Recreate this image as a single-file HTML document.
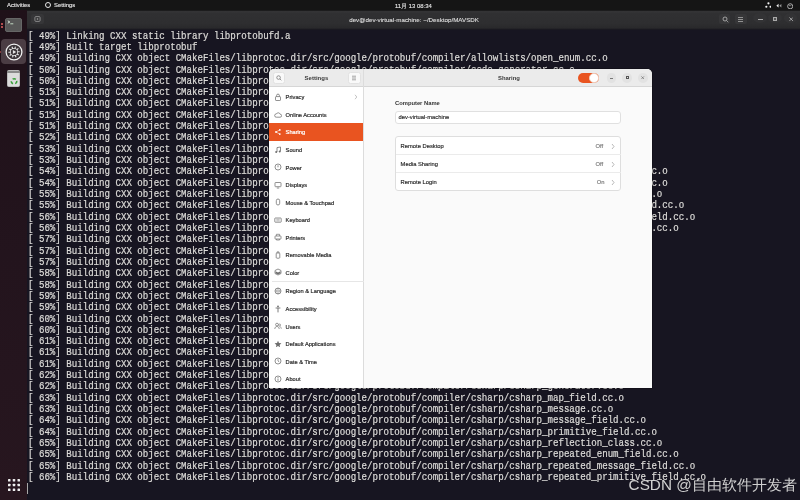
<!DOCTYPE html>
<html><head><meta charset="utf-8">
<style>
*{margin:0;padding:0;box-sizing:border-box}
html,body{width:800px;height:500px;overflow:hidden;background:#171421;font-family:"Liberation Sans",sans-serif}
#root{position:absolute;left:0;top:0;width:800px;height:500px;overflow:hidden}
.abs{position:absolute}
#topbar{will-change:transform;left:0;top:0;width:800px;height:9.5px;background:#151515;color:#e8e8e8;font-size:5.9px;-webkit-text-stroke:0.12px #e8e8e8}
#dock{left:0;top:9.5px;width:26.8px;height:490.5px;background:linear-gradient(#1f1119,#23141d 50%,#27161f)}
#thead{will-change:transform;left:26.8px;top:9.5px;width:773.2px;height:20.5px;background:linear-gradient(#1c1c1d 0,#1c1c1d 0.6px,#363638 1.6px,#303032 3px,#2e2e30 13.5px,#29292b 18px,#1a1920 19.5px)}
#term{left:26.8px;top:30px;width:773.2px;height:470px;background:#171521}
.tl{position:absolute;left:28px;height:10px;font-family:"Liberation Mono",monospace;font-size:9.13px;line-height:10px;color:#d6d5d2;white-space:pre;transform-origin:0 50%;transform:scaleY(1.19);-webkit-text-stroke:0.2px #d6d5d2;will-change:transform}
#win{left:269px;top:69px;width:382.6px;height:319.1px;border-radius:5px 5px 0 0;overflow:hidden;background:#fafafa;will-change:transform;box-shadow:0 0 0 0.5px rgba(0,0,0,.4)}
#whead{left:0;top:0;width:383px;height:18.2px;background:#ebebeb;border-bottom:0.8px solid #d6d6d6}
#side{left:0;top:18.2px;width:94.6px;height:302px;background:#ffffff;border-right:0.8px solid #dcdcdc}
.it{position:absolute;left:0;width:94px;height:17.8px;font-size:5.7px;color:#2e2e2e}
.it span{position:absolute;left:16.6px;top:6.6px;line-height:7px;white-space:nowrap;-webkit-text-stroke:0.2px currentColor}
.it .ico{position:absolute;left:4.5px;top:5.2px}
.it .chev{position:absolute;left:84.6px;top:6.0px}
.sel{background:#e95420;color:#fff}
.hb{position:absolute;background:#f9f9f9;border:0.5px solid #e2e2e2;border-radius:2.5px}
.wc{position:absolute;width:9.6px;height:9.6px;border-radius:50%;background:#e2e2e2}
.lbl{position:absolute;font-size:5.8px;color:#2a2a2a;white-space:nowrap;-webkit-text-stroke:0.16px currentColor}
.tb{position:absolute;background:#363638;border-radius:2px}
</style></head><body><div id="root">
<div id="topbar" class="abs">
  <div class="abs" style="left:7px;top:2.4px">Activities</div>
  <div class="abs" style="left:45px;top:2.2px;width:6px;height:6px;border:1.4px solid #e8e8e8;border-radius:50%"></div>
  <div class="abs" style="left:54px;top:2.4px">Settings</div>
  <div class="abs" style="left:395px;top:2.2px">11月 13 08:34</div>
  <svg class="abs" style="left:764.6px;top:2.2px" width="6.9" height="6.1" viewBox="0 0 8 7.2"><circle cx="4" cy="1.6" r="1.3" fill="#f2f2f2"/><circle cx="1.5" cy="5.6" r="1.3" fill="#f2f2f2"/><circle cx="6.5" cy="5.6" r="1.3" fill="#f2f2f2"/></svg>
  <svg class="abs" style="left:776.4px;top:3px" width="6" height="5.4" viewBox="0 0 7 6.3"><path d="M0.4 3.15L3 .9v4.5z" fill="#f2f2f2"/><path d="M3.9 3.15L6.3 1.1v4.1z" fill="#9a9a9a"/></svg>
  <svg class="abs" style="left:786.8px;top:2.6px" width="6.4" height="6.4" viewBox="0 0 7 7"><circle cx="3.5" cy="3.6" r="2.8" fill="none" stroke="#e0e0e0" stroke-width="0.8"/><path d="M2.5 2.4L3.5 3.4 4.5 2.4" fill="none" stroke="#e0e0e0" stroke-width="0.7"/></svg>
</div>
<div id="dock" class="abs">
  <div class="abs" style="left:5.1px;top:8.1px;width:17.1px;height:14.7px;border-radius:2px;background:#575757;border:0.6px solid #666"></div>
  <svg class="abs" style="left:7px;top:10.5px" width="8" height="6" viewBox="0 0 8 6"><path d="M0.8 .8L2.8 2 .8 3.2" fill="none" stroke="#e4f4e4" stroke-width="0.9"/><path d="M3.3 3.8h3" stroke="#cfe8cf" stroke-width="0.9"/></svg>
  <div class="abs" style="left:1.1px;top:13.1px;width:2.2px;height:2.2px;border-radius:50%;background:#e06060"></div>
  <div class="abs" style="left:1.1px;top:16.4px;width:2.2px;height:2.2px;border-radius:50%;background:#e06060"></div>
  <div class="abs" style="left:1px;top:29.5px;width:24.8px;height:25.2px;border-radius:4px;background:#4b3d44"></div>
  <div class="abs" style="left:0px;top:41.3px;width:1.4px;height:1.8px;border-radius:50%;background:#a04545"></div>
  <svg class="abs" style="left:4.5px;top:33.2px" width="18" height="18" viewBox="0 0 18 18"><circle cx="9" cy="9" r="7.9" fill="#3b3438" stroke="#f2f2f2" stroke-width="1.3"/><path d="M9.00 5.00 L9.45 5.03 L9.93 3.38 L10.96 3.65 L10.57 5.32 L11.35 5.76 L11.35 5.76 L11.70 6.05 L13.06 4.99 L13.73 5.83 L12.43 6.94 L12.80 7.76 L12.80 7.76 L12.92 8.20 L14.64 8.14 L14.70 9.21 L12.98 9.35 L12.80 10.24 L12.80 10.24 L12.64 10.66 L14.06 11.62 L13.48 12.52 L12.02 11.63 L11.35 12.24 L11.35 12.24 L10.97 12.48 L11.56 14.09 L10.56 14.48 L9.90 12.90 L9.00 13.00 L9.00 13.00 L8.55 12.97 L8.07 14.62 L7.04 14.35 L7.43 12.68 L6.65 12.24 L6.65 12.24 L6.30 11.95 L4.94 13.01 L4.27 12.17 L5.57 11.06 L5.20 10.24 L5.20 10.24 L5.08 9.80 L3.36 9.86 L3.30 8.79 L5.02 8.65 L5.20 7.76 L5.20 7.76 L5.36 7.34 L3.94 6.38 L4.52 5.48 L5.98 6.37 L6.65 5.76 L6.65 5.76 L7.03 5.52 L6.44 3.91 L7.44 3.52 L8.10 5.10 L9.00 5.00Z" fill="#e6e6e6"/><circle cx="9" cy="9" r="3.2" fill="#3b3438"/><path d="M7.9 7L11.2 9 7.9 11z" fill="#e6e6e6"/></svg>
  <div class="abs" style="left:6.6px;top:60.7px;width:13.8px;height:16.8px;border-radius:1.5px;background:#dcdcdc;border:0.6px solid #bdbdbd"></div>
  <div class="abs" style="left:7.2px;top:61.3px;width:12.6px;height:1.8px;background:#8a8a8a"></div>
  <svg class="abs" style="left:9.6px;top:67.3px" width="8" height="8" viewBox="0 0 8 8"><g fill="none" stroke="#3aa03a" stroke-width="1.6"><path d="M2.6 2.2a2.8 2.8 0 0 1 3.2.1"/><path d="M6.8 3.8a2.8 2.8 0 0 1-1.6 2.8"/><path d="M3 6.7a2.8 2.8 0 0 1-1.8-2.5"/></g></svg>
  <svg class="abs" style="left:7.75px;top:469.5px" width="12" height="12" viewBox="0 0 12 12"><g fill="#f0f0f0"><rect x="0" y="0" width="2.5" height="2.5" rx="0.6"/><rect x="4.75" y="0" width="2.5" height="2.5" rx="0.6"/><rect x="9.5" y="0" width="2.5" height="2.5" rx="0.6"/><rect x="0" y="4.75" width="2.5" height="2.5" rx="0.6"/><rect x="4.75" y="4.75" width="2.5" height="2.5" rx="0.6"/><rect x="9.5" y="4.75" width="2.5" height="2.5" rx="0.6"/><rect x="0" y="9.5" width="2.5" height="2.5" rx="0.6"/><rect x="4.75" y="9.5" width="2.5" height="2.5" rx="0.6"/><rect x="9.5" y="9.5" width="2.5" height="2.5" rx="0.6"/></g></svg>
</div>
<div id="thead" class="abs">
  <div class="tb" style="left:4px;top:3.5px;width:12.5px;height:10.7px"></div>
  <svg class="abs" style="left:6.8px;top:6.2px" width="7" height="6" viewBox="0 0 7 6"><rect x="0.9" y="0.6" width="5.2" height="4.8" rx="1" fill="none" stroke="#aaa" stroke-width="0.7"/><circle cx="3.5" cy="3" r="0.8" fill="#aaa"/></svg>
  <div class="abs" style="left:322.2px;top:5.6px;font-size:6.23px;color:#dedede;white-space:nowrap;-webkit-text-stroke:0.12px #dedede">dev@dev-virtual-machine: ~/Desktop/MAVSDK</div>
  <div class="tb" style="left:692.2px;top:3.5px;width:11.2px;height:10.7px"></div>
  <div class="tb" style="left:707.9px;top:3.5px;width:11.9px;height:10.7px"></div>
  <svg class="abs" style="left:694.5px;top:5.5px" width="7" height="7" viewBox="0 0 7 7"><circle cx="3" cy="3" r="2" fill="none" stroke="#bbb" stroke-width="0.8"/><path d="M4.5 4.5L6.3 6.3" stroke="#a8a8a8" stroke-width="0.8"/></svg>
  <svg class="abs" style="left:710.4px;top:5.5px" width="7" height="7" viewBox="0 0 7 7"><path d="M1 1.5h5M1 3.5h5M1 5.5h5" stroke="#a8a8a8" stroke-width="0.8"/></svg>
  <div class="abs" style="left:726.2px;top:3.2px;width:13.8px;height:9.8px;border-radius:50%;background:#333335"></div>
  <div class="abs" style="left:741.2px;top:3.2px;width:13.8px;height:9.8px;border-radius:50%;background:#333335"></div>
  <div class="abs" style="left:756.6px;top:3.2px;width:13.8px;height:9.8px;border-radius:50%;background:#333335"></div>
  <div class="abs" style="left:731px;top:9.4px;width:5px;height:0.8px;background:#a8a8a8"></div>
  <div class="abs" style="left:746.2px;top:7.3px;width:4.2px;height:4px;border:0.8px solid #aaa;background:#555"></div>
  <svg class="abs" style="left:761.5px;top:7.1px" width="4.4" height="4.4" viewBox="0 0 5 5"><path d="M.5.5l4 4M4.5.5l-4 4" stroke="#bbb" stroke-width="0.9"/></svg>
</div>
<div id="term" class="abs"></div>
<svg class="abs" style="left:0;top:0;will-change:transform" width="800" height="500"><g transform="scale(1,1.19)" font-family="Liberation Mono" font-size="9.13" fill="#dcdbd8" stroke="#dcdbd8" stroke-width="0.2"><text x="28" y="32.395" xml:space="preserve">[ 49%] Linking CXX static library libprotobufd.a</text>
<text x="28" y="41.908" xml:space="preserve">[ 49%] Built target libprotobuf</text>
<text x="28" y="51.420" xml:space="preserve">[ 49%] Building CXX object CMakeFiles/libprotoc.dir/src/google/protobuf/compiler/allowlists/open_enum.cc.o</text>
<text x="28" y="60.933" xml:space="preserve">[ 50%] Building CXX object CMakeFiles/libprotoc.dir/src/google/protobuf/compiler/code_generator.cc.o</text>
<text x="28" y="70.445" xml:space="preserve">[ 50%] Building CXX object CMakeFiles/libprotoc.dir/src/google/protobuf/compiler/command_line_interface.cc.o</text>
<text x="28" y="79.958" xml:space="preserve">[ 51%] Building CXX object CMakeFiles/libprotoc.dir/src/google/protobuf/compiler/cpp/enum.cc.o</text>
<text x="28" y="89.471" xml:space="preserve">[ 51%] Building CXX object CMakeFiles/libprotoc.dir/src/google/protobuf/compiler/cpp/extension.cc.o</text>
<text x="28" y="98.983" xml:space="preserve">[ 51%] Building CXX object CMakeFiles/libprotoc.dir/src/google/protobuf/compiler/cpp/field.cc.o</text>
<text x="28" y="108.496" xml:space="preserve">[ 51%] Building CXX object CMakeFiles/libprotoc.dir/src/google/protobuf/compiler/allowlists/editions.cc.o</text>
<text x="28" y="118.008" xml:space="preserve">[ 52%] Building CXX object CMakeFiles/libprotoc.dir/src/google/protobuf/compiler/allowlists/weak_imports.cc.o</text>
<text x="28" y="127.521" xml:space="preserve">[ 53%] Building CXX object CMakeFiles/libprotoc.dir/src/google/protobuf/compiler/cpp/arena_ctor_visibility.cc.o</text>
<text x="28" y="137.034" xml:space="preserve">[ 53%] Building CXX object CMakeFiles/libprotoc.dir/src/google/protobuf/compiler/cpp/extension.cc.o</text>
<text x="28" y="146.546" xml:space="preserve">[ 54%] Building CXX object CMakeFiles/libprotoc.dir/src/google/protobuf/compiler/cpp/field_generators/cord_field.cc.o</text>
<text x="28" y="156.059" xml:space="preserve">[ 54%] Building CXX object CMakeFiles/libprotoc.dir/src/google/protobuf/compiler/cpp/field_generators/enum_field.cc.o</text>
<text x="28" y="165.571" xml:space="preserve">[ 55%] Building CXX object CMakeFiles/libprotoc.dir/src/google/protobuf/compiler/cpp/field_generators/map_field.cc.o</text>
<text x="28" y="175.084" xml:space="preserve">[ 55%] Building CXX object CMakeFiles/libprotoc.dir/src/google/protobuf/compiler/cpp/field_generators/message_field.cc.o</text>
<text x="28" y="184.597" xml:space="preserve">[ 56%] Building CXX object CMakeFiles/libprotoc.dir/src/google/protobuf/compiler/cpp/field_generators/primitive_field.cc.o</text>
<text x="28" y="194.109" xml:space="preserve">[ 56%] Building CXX object CMakeFiles/libprotoc.dir/src/google/protobuf/compiler/cpp/field_generators/string_field.cc.o</text>
<text x="28" y="203.622" xml:space="preserve">[ 57%] Building CXX object CMakeFiles/libprotoc.dir/src/google/protobuf/compiler/cpp/file.cc.o</text>
<text x="28" y="213.134" xml:space="preserve">[ 57%] Building CXX object CMakeFiles/libprotoc.dir/src/google/protobuf/compiler/cpp/generator.cc.o</text>
<text x="28" y="222.647" xml:space="preserve">[ 57%] Building CXX object CMakeFiles/libprotoc.dir/src/google/protobuf/compiler/cpp/helpers.cc.o</text>
<text x="28" y="232.160" xml:space="preserve">[ 58%] Building CXX object CMakeFiles/libprotoc.dir/src/google/protobuf/compiler/cpp/message.cc.o</text>
<text x="28" y="241.672" xml:space="preserve">[ 58%] Building CXX object CMakeFiles/libprotoc.dir/src/google/protobuf/compiler/cpp/padding_optimizer.cc.o</text>
<text x="28" y="251.185" xml:space="preserve">[ 59%] Building CXX object CMakeFiles/libprotoc.dir/src/google/protobuf/compiler/cpp/parse_function_generator.cc.o</text>
<text x="28" y="260.697" xml:space="preserve">[ 59%] Building CXX object CMakeFiles/libprotoc.dir/src/google/protobuf/compiler/cpp/service.cc.o</text>
<text x="28" y="270.210" xml:space="preserve">[ 60%] Building CXX object CMakeFiles/libprotoc.dir/src/google/protobuf/compiler/cpp/tracker.cc.o</text>
<text x="28" y="279.723" xml:space="preserve">[ 60%] Building CXX object CMakeFiles/libprotoc.dir/src/google/protobuf/compiler/csharp/csharp_doc_comment.cc.o</text>
<text x="28" y="289.235" xml:space="preserve">[ 61%] Building CXX object CMakeFiles/libprotoc.dir/src/google/protobuf/compiler/csharp/csharp_enum.cc.o</text>
<text x="28" y="298.748" xml:space="preserve">[ 61%] Building CXX object CMakeFiles/libprotoc.dir/src/google/protobuf/compiler/csharp/csharp_enum_field.cc.o</text>
<text x="28" y="308.261" xml:space="preserve">[ 61%] Building CXX object CMakeFiles/libprotoc.dir/src/google/protobuf/compiler/csharp/csharp_field_base.cc.o</text>
<text x="28" y="317.773" xml:space="preserve">[ 62%] Building CXX object CMakeFiles/libprotoc.dir/src/google/protobuf/compiler/csharp/csharp_helpers.cc.o</text>
<text x="28" y="327.286" xml:space="preserve">[ 62%] Building CXX object CMakeFiles/libprotoc.dir/src/google/protobuf/compiler/csharp/csharp_generator.cc.o</text>
<text x="28" y="336.798" xml:space="preserve">[ 63%] Building CXX object CMakeFiles/libprotoc.dir/src/google/protobuf/compiler/csharp/csharp_map_field.cc.o</text>
<text x="28" y="346.311" xml:space="preserve">[ 63%] Building CXX object CMakeFiles/libprotoc.dir/src/google/protobuf/compiler/csharp/csharp_message.cc.o</text>
<text x="28" y="355.824" xml:space="preserve">[ 64%] Building CXX object CMakeFiles/libprotoc.dir/src/google/protobuf/compiler/csharp/csharp_message_field.cc.o</text>
<text x="28" y="365.336" xml:space="preserve">[ 64%] Building CXX object CMakeFiles/libprotoc.dir/src/google/protobuf/compiler/csharp/csharp_primitive_field.cc.o</text>
<text x="28" y="374.849" xml:space="preserve">[ 65%] Building CXX object CMakeFiles/libprotoc.dir/src/google/protobuf/compiler/csharp/csharp_reflection_class.cc.o</text>
<text x="28" y="384.361" xml:space="preserve">[ 65%] Building CXX object CMakeFiles/libprotoc.dir/src/google/protobuf/compiler/csharp/csharp_repeated_enum_field.cc.o</text>
<text x="28" y="393.874" xml:space="preserve">[ 65%] Building CXX object CMakeFiles/libprotoc.dir/src/google/protobuf/compiler/csharp/csharp_repeated_message_field.cc.o</text>
<text x="28" y="403.387" xml:space="preserve">[ 66%] Building CXX object CMakeFiles/libprotoc.dir/src/google/protobuf/compiler/csharp/csharp_repeated_primitive_field.cc.o</text></g></svg>
<div class="abs" style="left:27px;top:482.5px;width:1.3px;height:11.3px;background:#a8a8a8"></div>
<div class="abs" style="left:628.6px;top:476.3px;font-size:15.3px;line-height:18px;color:#d0d0d0;white-space:nowrap">CSDN @自由软件开发者</div>
<div id="win" class="abs">
  <div id="whead" class="abs">
    <div class="hb" style="left:3.6px;top:2.8px;width:12.8px;height:12.2px"></div>
    <svg class="abs" style="left:6.6px;top:6.3px" width="6" height="6" viewBox="0 0 7 7"><circle cx="3" cy="3" r="2.1" fill="none" stroke="#666" stroke-width="0.8"/><path d="M4.6 4.6L6.2 6.2" stroke="#666" stroke-width="0.8"/></svg>
    <div class="hb" style="left:78.6px;top:2.8px;width:13px;height:12.2px"></div>
    <svg class="abs" style="left:82.1px;top:6px" width="6" height="6" viewBox="0 0 6 6"><path d="M1 1.2h4M1 3h4M1 4.8h4" stroke="#8a8a8a" stroke-width="0.75"/></svg>
    <div class="abs" style="left:35.6px;top:5.6px;font-size:6px;font-weight:bold;color:#3a3a3a">Settings</div>
    <div class="abs" style="left:94.4px;top:0;width:0.8px;height:18.2px;background:#dcdcdc"></div>
    <div class="abs" style="left:229px;top:5.8px;font-size:5.9px;font-weight:bold;color:#3a3a3a">Sharing</div>
    <div class="abs" style="left:309.4px;top:3.7px;width:20.4px;height:10.6px;border-radius:5.3px;background:#e95420"></div>
    <div class="abs" style="left:319.9px;top:4.15px;width:9.7px;height:9.7px;border-radius:50%;background:#fff;border:0.5px solid #f0d0c0"></div>
    <div class="wc" style="left:337.9px;top:4px"></div>
    <div class="wc" style="left:353.4px;top:4px"></div>
    <div class="wc" style="left:369.3px;top:4px"></div>
    <div class="abs" style="left:341px;top:8.7px;width:3.4px;height:0.6px;background:#777"></div>
    <div class="abs" style="left:356.7px;top:7.3px;width:3px;height:3px;border:0.7px solid #555"></div>
    <svg class="abs" style="left:372.4px;top:7.1px" width="3.4" height="3.4" viewBox="0 0 4 4"><path d="M.4.4l3.2 3.2M3.6.4L.4 3.6" stroke="#555" stroke-width="0.65"/></svg>
  </div>
  <div id="side" class="abs"></div>
  <div class="abs" style="left:3.3px;top:212.4px;width:91.5px;height:0.6px;background:#e6e6e6"></div>
  <div class="it" style="top:18.80px"><svg class="ico" width="8" height="8" viewBox="0 0 8 8"><rect x="1.5" y="3.6" width="5" height="3.9" rx="0.6" fill="none" stroke="#6e6e6e" stroke-width="0.75"/><path d="M2.6 3.6V2.5a1.4 1.4 0 0 1 2.8 0v1.1" fill="none" stroke="#6e6e6e" stroke-width="0.75"/></svg><span>Privacy</span><svg class="chev" width="4" height="6" viewBox="0 0 4 6"><path d="M1 .8l1.8 2.2L1 5.2" fill="none" stroke="#9a9a9a" stroke-width="0.6"/></svg></div>
<div class="it" style="top:36.35px"><svg class="ico" width="8" height="8" viewBox="0 0 8 8"><path d="M2.2 6.2h3.9a1.5 1.5 0 0 0 0-3 2 2 0 0 0-3.7-.3 1.6 1.6 0 0 0-.2 3.3z" fill="none" stroke="#6e6e6e" stroke-width="0.75"/></svg><span>Online Accounts</span></div>
<div class="it sel" style="top:53.90px"><svg class="ico" width="8" height="8" viewBox="0 0 8 8"><circle cx="5.8" cy="1.9" r="0.9" fill="#ffffff"/><circle cx="2" cy="4" r="0.9" fill="#ffffff"/><circle cx="5.8" cy="6.1" r="0.9" fill="#ffffff"/><path d="M5.8 1.9L2 4l3.8 2.1" fill="none" stroke="#ffffff" stroke-width="0.6"/></svg><span>Sharing</span></div>
<div class="it" style="top:71.45px"><svg class="ico" width="8" height="8" viewBox="0 0 8 8"><path d="M3 6V1.6l3.5-.6v4.4" fill="none" stroke="#6e6e6e" stroke-width="0.8"/><circle cx="2.2" cy="6" r="1" fill="#6e6e6e"/><circle cx="5.7" cy="5.4" r="1" fill="#6e6e6e"/></svg><span>Sound</span></div>
<div class="it" style="top:89.00px"><svg class="ico" width="8" height="8" viewBox="0 0 8 8"><circle cx="4" cy="4" r="3" fill="none" stroke="#6e6e6e" stroke-width="0.75"/><path d="M4 2.3v2" stroke="#6e6e6e" stroke-width="0.8"/></svg><span>Power</span></div>
<div class="it" style="top:106.55px"><svg class="ico" width="8" height="8" viewBox="0 0 8 8"><rect x="1" y="1.5" width="6" height="4.2" rx="0.5" fill="none" stroke="#6e6e6e" stroke-width="0.75"/><path d="M2.8 7h2.4" stroke="#6e6e6e" stroke-width="0.8"/></svg><span>Displays</span></div>
<div class="it" style="top:124.10px"><svg class="ico" width="8" height="8" viewBox="0 0 8 8"><rect x="2.3" y="1" width="3.4" height="6" rx="1.7" fill="none" stroke="#6e6e6e" stroke-width="0.75"/></svg><span>Mouse &amp; Touchpad</span></div>
<div class="it" style="top:141.65px"><svg class="ico" width="8" height="8" viewBox="0 0 8 8"><rect x="0.8" y="2" width="6.4" height="4.2" rx="0.5" fill="none" stroke="#6e6e6e" stroke-width="0.75"/><path d="M2.3 3.3h3.4M2.3 4.8h3.4" stroke="#6e6e6e" stroke-width="0.5"/></svg><span>Keyboard</span></div>
<div class="it" style="top:159.20px"><svg class="ico" width="8" height="8" viewBox="0 0 8 8"><rect x="1" y="3" width="6" height="3" rx="0.5" fill="none" stroke="#6e6e6e" stroke-width="0.75"/><path d="M2.4 3V1.3h3.2V3M2.4 6v1h3.2V6" fill="none" stroke="#6e6e6e" stroke-width="0.7"/></svg><span>Printers</span></div>
<div class="it" style="top:176.75px"><svg class="ico" width="8" height="8" viewBox="0 0 8 8"><rect x="2.2" y="2" width="3.6" height="5.2" rx="0.8" fill="none" stroke="#6e6e6e" stroke-width="0.75"/><path d="M3 2V.9h2V2" fill="none" stroke="#6e6e6e" stroke-width="0.7"/></svg><span>Removable Media</span></div>
<div class="it" style="top:194.30px"><svg class="ico" width="8" height="8" viewBox="0 0 8 8"><path d="M1 2.5L4 1l3 1.5v3L4 7 1 5.5z" fill="none" stroke="#6e6e6e" stroke-width="0.75"/><path d="M1.5 3.3L4 4.5l2.5-1.2V5.3L4 6.6 1.5 5.3z" fill="#6e6e6e"/></svg><span>Color</span></div>
<div class="it" style="top:212.85px"><svg class="ico" width="8" height="8" viewBox="0 0 8 8"><circle cx="4" cy="4" r="3" fill="none" stroke="#6e6e6e" stroke-width="0.75"/><path d="M1 4h6M4 1c-1.6 1.8-1.6 4.2 0 6M4 1c1.6 1.8 1.6 4.2 0 6" fill="none" stroke="#6e6e6e" stroke-width="0.5"/></svg><span>Region &amp; Language</span></div>
<div class="it" style="top:230.40px"><svg class="ico" width="8" height="8" viewBox="0 0 8 8"><circle cx="4" cy="1.4" r="0.9" fill="#6e6e6e"/><path d="M1.6 3h4.8M4 3v4.4" stroke="#6e6e6e" stroke-width="0.9"/></svg><span>Accessibility</span></div>
<div class="it" style="top:247.95px"><svg class="ico" width="8" height="8" viewBox="0 0 8 8"><circle cx="3" cy="2.6" r="1.4" fill="none" stroke="#6e6e6e" stroke-width="0.7"/><path d="M0.8 7c0-1.6 1-2.5 2.2-2.5S5.2 5.4 5.2 7" fill="none" stroke="#6e6e6e" stroke-width="0.7"/><circle cx="5.6" cy="3" r="1" fill="none" stroke="#6e6e6e" stroke-width="0.6"/><path d="M5.6 4.6c1 0 1.7.8 1.7 2.2" fill="none" stroke="#6e6e6e" stroke-width="0.6"/></svg><span>Users</span></div>
<div class="it" style="top:265.50px"><svg class="ico" width="8" height="8" viewBox="0 0 8 8"><path d="M4 .8l1 2.2 2.4.3-1.8 1.6.5 2.4L4 6.1 1.9 7.3l.5-2.4L.6 3.3 3 3z" fill="#6e6e6e"/></svg><span>Default Applications</span></div>
<div class="it" style="top:283.05px"><svg class="ico" width="8" height="8" viewBox="0 0 8 8"><circle cx="4" cy="4" r="3" fill="none" stroke="#6e6e6e" stroke-width="0.75"/><path d="M4 2.2V4l1.3 1" fill="none" stroke="#6e6e6e" stroke-width="0.7"/></svg><span>Date &amp; Time</span></div>
<div class="it" style="top:300.60px"><svg class="ico" width="8" height="8" viewBox="0 0 8 8"><circle cx="4" cy="4" r="3" fill="none" stroke="#6e6e6e" stroke-width="0.75"/><path d="M4 3.5v2.3" stroke="#6e6e6e" stroke-width="0.8"/><circle cx="4" cy="2.4" r="0.5" fill="#6e6e6e"/></svg><span>About</span></div>
  <div class="abs" style="left:126px;top:30.6px;font-size:5.8px;font-weight:bold;color:#333">Computer Name</div>
  <div class="abs" style="left:126px;top:42.2px;width:226.2px;height:13px;background:#fff;border:0.7px solid #e0e0e0;border-radius:3px"></div>
  <div class="lbl" style="left:129.6px;top:45.4px">dev-virtual-machine</div>
  <div class="abs" style="left:126px;top:66.9px;width:226.2px;height:55.3px;background:#fff;border:0.7px solid #dedede;border-radius:3px"></div>
  <div class="abs" style="left:126.6px;top:85.3px;width:225px;height:0.7px;background:#ebebeb"></div>
  <div class="abs" style="left:126.6px;top:103.1px;width:225px;height:0.7px;background:#ebebeb"></div>
  <div class="lbl" style="left:131.6px;top:73.7px">Remote Desktop</div>
  <div class="lbl" style="left:131.6px;top:91.7px">Media Sharing</div>
  <div class="lbl" style="left:131.6px;top:109.7px">Remote Login</div>
  <div class="lbl" style="left:326.6px;top:74px;color:#7a7a7a">Off</div>
  <div class="lbl" style="left:326.6px;top:92px;color:#7a7a7a">Off</div>
  <div class="lbl" style="left:327.7px;top:110px;color:#7a7a7a">On</div>
  <svg class="abs" style="left:341.5px;top:73.5px" width="4" height="7" viewBox="0 0 4 7"><path d="M1 1l2 2.5L1 6" fill="none" stroke="#8a8a8a" stroke-width="0.6"/></svg>
  <svg class="abs" style="left:341.5px;top:91.5px" width="4" height="7" viewBox="0 0 4 7"><path d="M1 1l2 2.5L1 6" fill="none" stroke="#8a8a8a" stroke-width="0.6"/></svg>
  <svg class="abs" style="left:341.5px;top:109.5px" width="4" height="7" viewBox="0 0 4 7"><path d="M1 1l2 2.5L1 6" fill="none" stroke="#8a8a8a" stroke-width="0.6"/></svg>
</div>
</div></body></html>
